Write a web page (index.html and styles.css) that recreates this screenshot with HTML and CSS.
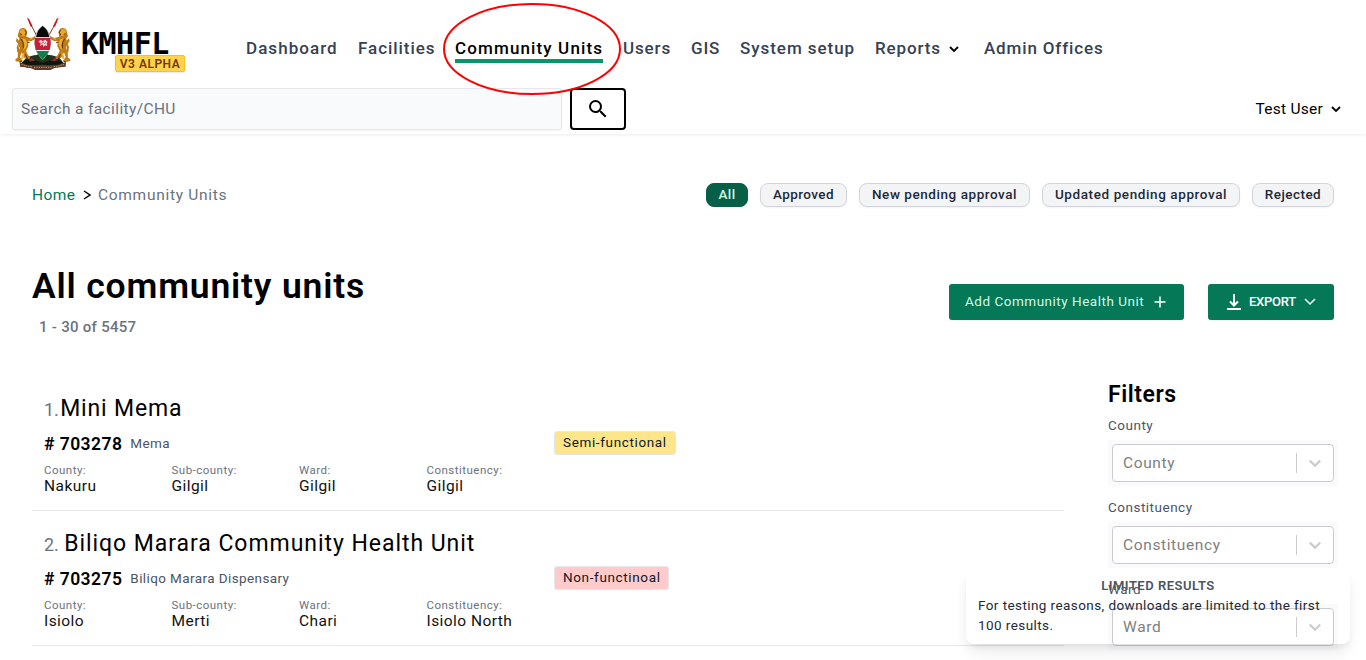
FILE: index.html
```html
<!DOCTYPE html>
<html lang="en">
<head>
<meta charset="utf-8">
<title>KMHFL - Community Units</title>
<link rel="stylesheet" href="styles.css">
</head>
<body>
<header class="header">
  <div class="topbar">
    <a class="brand">
      <svg class="arms" viewBox="0 0 186 174">
        <path d="M52 18l60 110M133 18l-62 110" fill="none" stroke="#9b2d28" stroke-width="3"/>
        <path d="M45 5l6 3 11 23-6 1zM140 5l-6 3-11 23 6 1z" fill="#d01824"/>
        <path d="M24 146l20-22 22-6 26-3 27 3 22 6 18 22-20 8-47 6-47-5z" fill="#21351e"/>
        <path d="M30 140l18-12 7 10 15-5 22 7 22-7 14 5 8-10 16 11-10 12H42z" fill="#10150f"/>
        <path d="M50 134l10-8 8 8zM118 134l10-8 8 8z" fill="#943132"/>
        <g id="lion">
          <path d="M21 44c3-9 14-11 21-4l4 8-3 14 14 4 13-5 3 6-14 8-11 1 1 14-7 15 6 12 7 8-3 5-15-5-8-16-5 14 7 10-2 6-18-3-1-6 7-5 1-16 5-12-4-13 3-17-5-6z" fill="#c27a12"/>
          <path d="M23 44l7-5 8 2 4 8-4 11-8-1-6-6z" fill="#e9a632"/>
          <path d="M31 67l9 3 6 11-5 16-8 5 5-15zM52 73l17-9-14 3zM29 119l8-12-2 19-8 6z" fill="#f0ac38"/>
          <path d="M25 113l-9-4-2-16 4-10-6-7 2-10 7 8-1 18 2 10 7 4z" fill="#bd7a18"/>
          <path d="M24 53l6 3M39 43l4 6-4 8M27 68l6 12 1 17M46 79l7 1M40 115l9 19M23 138l8-3" fill="none" stroke="#402608" stroke-width="2.5"/>
        </g>
        <use href="#lion" transform="translate(185 0) scale(-1 1)"/>
        <path d="M92 30C81 38 73 48 69 62c-4 26 3 50 23 70 20-20 27-44 23-70-4-14-12-24-23-32z" fill="#fff" stroke="#333" stroke-width="1"/>
        <path d="M92 30c-10 7-17 17-20 33h40c-3-16-10-26-20-33z" fill="#080a0b"/>
        <path d="M69 65h46q3 18-2 37H71q-5-19-2-37z" fill="#c91f36"/>
        <path d="M73 105h38q-6 14-19 26-13-12-19-26z" fill="#128049"/>
        <path d="M79 76l8-4 5 4 8-5 7 7-3 4 2 8-7-2-5 5-1-8-9 5 2-7z" fill="#f0dfe0"/>
        <path d="M82 78l7 5 4-5 5 6 4-6" fill="none" stroke="#a84a58" stroke-width="2"/>
        <path d="M23 138l21 8 31 2 17-2 17 2 31-2 22-8-1 14-31 3-15 7H69l-14-7-31-3z" fill="#5d3a25"/>
        <path d="M28 145l20 6 12 1M125 152l12-1 19-6M66 154h54" fill="none" stroke="#c39a72" stroke-width="3" stroke-dasharray="4 3"/>
      </svg>
      <span class="wordmark">KMHFL</span>
      <span class="version">V3 ALPHA</span>
    </a>
    <nav class="nav">
      <a class="dash">Dashboard</a><a class="fac">Facilities</a><a class="active">Community Units</a><a>Users</a><a class="gis">GIS</a><a class="setup">System setup</a>
      <a class="reports">Reports <svg class="chev" viewBox="0 0 10 10"><path d="M1 3l4 4 4-4"/></svg></a><a class="offices">Admin Offices</a>
    </nav>
  </div>
  <div class="toolbar">
    <div class="search">Search a facility/CHU</div>
    <button class="search-btn"><svg viewBox="0 0 24 24"><path d="M15.5 14h-.79l-.28-.27A6.47 6.47 0 0 0 16 9.5 6.5 6.5 0 1 0 9.5 16c1.61 0 3.09-.59 4.23-1.57l.27.28v.79l5 4.99L20.49 19l-4.99-5zm-6 0a4.5 4.5 0 1 1 0-9 4.5 4.5 0 0 1 0 9z"/></svg></button>
    <div class="user">Test User <svg class="chev" viewBox="0 0 10 10"><path d="M1 3l4 4 4-4"/></svg></div>
  </div>
</header>
<svg class="marker" viewBox="0 0 178 92"><ellipse cx="89" cy="46" rx="88" ry="45"/></svg>
<main class="main">
  <div class="crumb-row">
    <div class="crumbs"><a class="home">Home</a><svg class="sep" viewBox="0 0 8 10"><path d="M1 1l6 4-6 4"/></svg><span class="here">Community Units</span></div>
    <div class="pills">
      <span class="pill p-all">All</span><span class="pill p-app">Approved</span><span class="pill p-new">New pending approval</span><span class="pill p-upd">Updated pending approval</span><span class="pill p-rej">Rejected</span>
    </div>
  </div>
  <div class="title-row">
    <div><h1>All community units</h1><p class="count">1 - 30 of 5457</p></div>
    <div class="actions">
      <button class="btn add"><span>Add Community Health Unit</span><svg viewBox="0 0 12 12"><path d="M6 .5v11M.5 6h11"/></svg></button>
      <button class="btn export"><svg class="dl" viewBox="0 0 14 16"><path d="M7 0v11M3 7.5l4 4 4-4M0 15h14"/></svg><span>EXPORT</span><svg class="down" viewBox="0 0 12 8"><path d="M1 1l5 5 5-5"/></svg></button>
    </div>
  </div>
  <div class="content">
    <div class="list">
      <article class="unit">
        <h2><span>1.</span> <b class="short">Mini Mema</b></h2>
        <div class="info"><div class="code"><strong># 703278</strong><span>Mema</span></div><span class="tag semi">Semi-functional</span></div>
        <dl><div><dt>County:</dt><dd>Nakuru</dd></div><div><dt>Sub-county:</dt><dd>Gilgil</dd></div><div><dt>Ward:</dt><dd>Gilgil</dd></div><div><dt>Constituency:</dt><dd>Gilgil</dd></div></dl>
      </article>
      <article class="unit">
        <h2><span>2.</span> <b>Biliqo Marara Community Health Unit</b></h2>
        <div class="info"><div class="code"><strong># 703275</strong><span>Biliqo Marara Dispensary</span></div><span class="tag non">Non-functinoal</span></div>
        <dl><div><dt>County:</dt><dd>Isiolo</dd></div><div><dt>Sub-county:</dt><dd>Merti</dd></div><div><dt>Ward:</dt><dd>Chari</dd></div><div><dt>Constituency:</dt><dd>Isiolo North</dd></div></dl>
      </article>
    </div>
    <aside class="filters">
      <h3>Filters</h3>
      <div class="field"><label>County</label><div class="wrap"><div class="select"><span>County</span><svg viewBox="0 0 20 20"><path d="M4.8 7.6L10 12.6l5.2-5"/></svg></div></div></div>
      <div class="field"><label>Constituency</label><div class="wrap"><div class="select"><span>Constituency</span><svg viewBox="0 0 20 20"><path d="M4.8 7.6L10 12.6l5.2-5"/></svg></div></div></div>
      <div class="field"><label>Ward</label><div class="wrap"><div class="select"><span>Ward</span><svg viewBox="0 0 20 20"><path d="M4.8 7.6L10 12.6l5.2-5"/></svg></div></div></div>
    </aside>
  </div>
</main>
<div class="toast"><h4>LIMITED RESULTS</h4><p>For testing reasons, downloads are limited to the first<br>100 results.</p></div>
</body>
</html>
```
FILE: styles.css
```css
* { box-sizing: border-box; }
body { margin: 0; height: 660px; overflow: hidden; position: relative; background: #fff; color: #000; font-family: Roboto, "Liberation Sans", sans-serif; font-size: 15.5px; letter-spacing: .4px; }
h1, h2, h3, h4, p, dl, dd { margin: 0; }
a, .pill, .tag, h1, h2, span { white-space: nowrap; }
button { font: inherit; letter-spacing: inherit; padding: 0; }
.header { height: 134px; box-shadow: 0 1px 3px rgba(0,0,0,.08); display: flex; flex-direction: column; }
.topbar { display: flex; height: 88px; }
.brand { position: relative; width: 246px; padding: 16px 0 0 12px; display: flex; }
.arms { width: 62px; height: 58px; flex: none; }
.wordmark { font: bold 30px/36px "DejaVu Sans Mono", monospace; letter-spacing: -.5px; margin: 10px 0 0 7px; }
.version { position: absolute; left: 115px; top: 55px; width: 70px; height: 17px; background: #fcd34d; border: 1px solid #fbbf24; border-radius: 2px; color: #78350f; font-weight: 600; font-size: 12px; line-height: 16px; letter-spacing: .5px; text-align: center; box-shadow: 0 1px 2px rgba(0,0,0,.1); }
.nav { display: grid; grid-template-columns: 112px 97px 168px 68px 49px 135px 109px 130px; align-items: start; padding-top: 37px; font-size: 17px; line-height: 22px; font-weight: 500; color: #374151; letter-spacing: .85px; }
.dash { letter-spacing: 1.05px; }
.fac { letter-spacing: .95px; }
.active { color: #000; width: 148px; border-bottom: 4px solid #059669; height: 26px; letter-spacing: 1.13px; }
.setup { letter-spacing: .95px; }
.chev { width: 10px; height: 10px; fill: none; stroke: #000; stroke-width: 1.8; }
.reports .chev { margin-left: 3px; }
.toolbar { display: flex; padding: 0 25px 0 12px; }
.search { width: 550px; height: 42px; border: 1px solid #e5e7eb; border-radius: 3px; background: #f9fafb; color: #6b7280; padding-left: 8px; line-height: 40px; box-shadow: 0 1px 2px rgba(0,0,0,.05); letter-spacing: .37px; }
.search-btn { width: 56px; height: 42px; margin-left: 8px; border: 2px solid #000; border-radius: 4px; background: #fff; display: flex; align-items: center; justify-content: center; }
.search-btn svg { width: 24px; height: 24px; }
.user { margin-left: auto; display: flex; align-items: center; gap: 8px; height: 42px; letter-spacing: .25px; }
.marker { position: absolute; left: 443px; top: 3px; width: 178px; height: 92px; fill: none; stroke: #f00; stroke-width: 2; }
.main { padding: 49px 32px 0; }
.crumb-row { display: flex; justify-content: space-between; height: 24px; }
.crumbs { display: flex; align-items: center; letter-spacing: .7px; }
.home { color: #047857; width: 51px; letter-spacing: .4px; }
.sep { width: 8px; height: 10px; margin-right: 7px; fill: none; stroke: #000; stroke-width: 1.4; }
.here { color: #6b7280; }
.pills { display: flex; gap: 12px; }
.pill { height: 24px; border: 1px solid #d1d5db; border-radius: 8px; background: #f3f4f6; color: #1f2937; font-size: 13.5px; font-weight: 500; line-height: 21px; text-align: center; box-shadow: 0 1px 2px rgba(0,0,0,.05); letter-spacing: .45px; }
.p-all { width: 42px; background: #065f46; border-color: #065f46; color: #d1fae5; }
.p-app { width: 87px; }
.p-new { width: 171px; letter-spacing: .55px; }
.p-upd { width: 198px; letter-spacing: .6px; }
.p-rej { width: 82px; }
.title-row { display: flex; justify-content: space-between; height: 175px; padding-top: 55px; }
h1 { font-size: 35.5px; line-height: 48px; font-weight: 600; letter-spacing: .82px; }
.count { margin: 5px 0 0 7px; line-height: 24px; font-size: 15px; font-weight: 500; color: #6b7280; letter-spacing: .28px; }
.actions { display: flex; gap: 24px; padding-top: 22px; }
.btn { height: 36px; border: 0; border-radius: 3px; background: #047857; color: #fff; font-size: 13px; line-height: 16px; display: flex; align-items: center; box-shadow: 0 1px 1px rgba(0,0,0,.05); }
.btn span { margin-top: -1px; }
.btn svg { fill: none; stroke: #fff; stroke-width: 1.5; }
.add { width: 235px; padding: 0 18px 0 16px; justify-content: space-between; color: #d1fae5; font-size: 13.5px; letter-spacing: .51px; }
.add span { margin-top: -3px; }
.add svg { width: 12px; height: 12px; }
.export { width: 126px; padding: 0 18px 0 19px; justify-content: space-between; font-weight: 500; letter-spacing: -.25px; }
.export .dl { width: 14px; height: 16px; stroke-width: 2; }
.export .down { width: 12px; height: 8px; }
.content { display: flex; gap: 44px; align-items: flex-start; margin-right: -4px; }
.list { width: 1032px; flex: none; padding-top: 1px; }
.unit { height: 135px; padding: 10px 12px 0; border-bottom: 1px solid #e5e7eb; }
.unit:first-child { height: 128px; padding-top: 3px; }
.unit h2 { font-size: 23px; line-height: 46px; font-weight: 400; letter-spacing: .95px; }
.unit h2 span { font-size: 18px; color: #6b7280; letter-spacing: -.2px; }
.unit h2 b { font-weight: 400; margin-left: -1px; }
.unit h2 .short { margin-left: -5px; letter-spacing: .85px; }
.info { display: grid; grid-template-columns: 510px auto; justify-content: start; height: 24px; margin-top: -2px; }
.code { display: flex; align-items: center; gap: 8px; font-size: 13.5px; color: #4b5563; letter-spacing: .4px; }
.code strong { font-size: 17.5px; line-height: 20px; font-weight: 600; color: #000; letter-spacing: .44px; padding-top: 1px; }
.tag { height: 24px; border: 1px solid #e5e7eb; border-radius: 3px; font-size: 13.5px; line-height: 21px; color: #111827; padding-left: 8px; letter-spacing: .64px; }
.semi { width: 122px; background: #fde68a; }
.non { width: 115px; background: #fecaca; }
dl { display: grid; grid-template-columns: repeat(4, 127.5px); padding-top: 8px; }
dt { font-size: 11.5px; line-height: 15px; color: #6b7280; letter-spacing: .48px; }
dd { font-size: 15.5px; line-height: 16px; letter-spacing: .45px; color: #111; }
.filters { width: 230px; padding-top: 1px; }
.filters h3 { font-size: 23px; line-height: 24px; font-weight: 600; letter-spacing: .55px; }
.field { height: 82px; padding-top: 6px; }
.field label { display: block; font-size: 13.5px; line-height: 24px; color: #4b5563; letter-spacing: .5px; }
.wrap { margin-top: 3px; padding: 4px; background: #f9fafb; height: 46px; border-radius: 3px; }
.select { height: 38px; width: 222px; border: 1px solid #ccc; border-radius: 4px; background: #fff; display: flex; align-items: center; padding-left: 10px; color: #808080; letter-spacing: .63px; }
.select span { flex: 1; }
.select svg { box-sizing: content-box; width: 20px; height: 20px; padding: 0 8px; border-left: 1px solid #ccc; fill: none; stroke: #ccc; stroke-width: 2.2; }
.toast { position: absolute; left: 966px; top: 568px; width: 384px; height: 76px; border-radius: 8px; box-shadow: 0 10px 15px -3px rgba(0,0,0,.1), 0 4px 6px -2px rgba(0,0,0,.05); padding: 8px 12px; color: #1f2937; font-size: 13.5px; line-height: 20px; letter-spacing: .42px; white-space: nowrap; }
.toast p { margin-top: -1px; }
.toast h4 { text-align: center; font-size: 13px; line-height: 20px; font-weight: 600; color: #4b5563; letter-spacing: .5px; }
```
